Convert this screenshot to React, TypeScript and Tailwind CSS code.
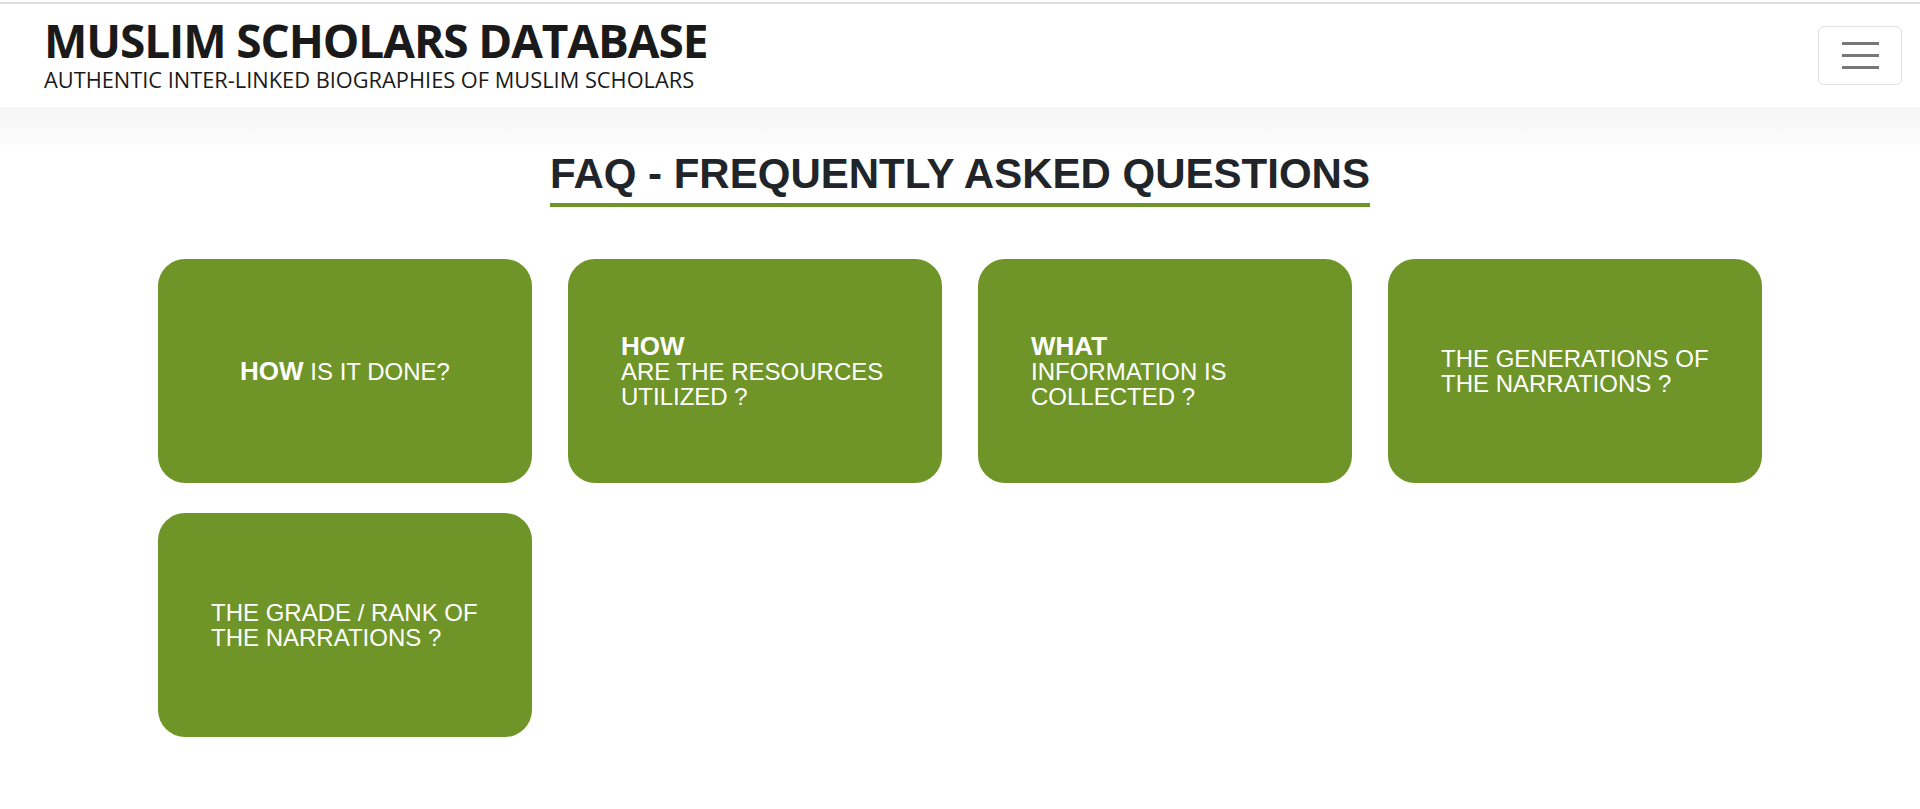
import React from 'react';

type Faq = {
  lead?: string;
  text: string;
  inline?: boolean;
};

const faqs: Faq[] = [
  { lead: 'HOW', text: 'IS IT DONE?', inline: true },
  { lead: 'HOW', text: 'ARE THE RESOURCES UTILIZED ?' },
  { lead: 'WHAT', text: 'INFORMATION IS COLLECTED ?' },
  { text: 'THE GENERATIONS OF THE NARRATIONS ?' },
  { text: 'THE GRADE / RANK OF THE NARRATIONS ?' },
];

function FaqCard({ item }: { item: Faq }) {
  if (item.inline) {
    return (
      <a
        href="#"
        className="h-[224px] rounded-[27px] bg-[#6f9529] text-white flex items-center justify-center px-[50px] text-center"
      >
        <span className="text-[24px] leading-[26px]">
          <b className="text-[26px] font-bold">{item.lead}</b> {item.text}
        </span>
      </a>
    );
  }

  return (
    <a
      href="#"
      className="h-[224px] rounded-[27px] bg-[#6f9529] text-white flex items-center pl-[53px] pr-[47px]"
    >
      <div>
        {item.lead && <div className="text-[26px] leading-[25px] font-bold">{item.lead}</div>}
        <div className="text-[24px] leading-[25px]">{item.text}</div>
      </div>
    </a>
  );
}

export default function App() {
  return (
    <div className="min-h-screen bg-white pt-[2px]">
      {/* Header */}
      <header className="border-t-2 border-[#dddddd] h-[105px] flex items-start justify-between pl-[44px] pr-[18px]">
        <div className="pt-[11px] font-['Open_Sans',sans-serif] text-[#1a1a1a]">
          <h1 className="text-[46px] leading-[50px] font-bold tracking-[-1.1px]">MUSLIM SCHOLARS DATABASE</h1>
          <p className="mt-[4px] text-[21.8px] leading-[22px]">
            AUTHENTIC INTER-LINKED BIOGRAPHIES OF MUSLIM SCHOLARS
          </p>
        </div>
        <button className="mt-[22px] w-[84px] h-[59px] border border-[#e2e2e2] rounded-[6px] flex flex-col items-center justify-center gap-[9px]">
          <span className="block w-[37px] h-[3px] bg-[#777777]" />
          <span className="block w-[37px] h-[3px] bg-[#777777]" />
          <span className="block w-[37px] h-[3px] bg-[#777777]" />
        </button>
      </header>

      {/* FAQ */}
      <main className="bg-[linear-gradient(#f5f5f5,#ffffff_48px)] pt-[42px] pb-[70px] font-['Liberation_Sans',Arial,sans-serif]">
        <div className="text-center">
          <h2 className="inline-block text-[42px] leading-[50px] font-bold text-[#212529] pb-[4px] border-b-4 border-[#6f9529]">
            FAQ - FREQUENTLY ASKED QUESTIONS
          </h2>
        </div>

        <div className="mt-[52px] mx-auto w-[1604px] grid grid-cols-4 gap-x-[36px] gap-y-[30px]">
          {faqs.map((f, i) => (
            <FaqCard key={i} item={f} />
          ))}
        </div>
      </main>
    </div>
  );
}
